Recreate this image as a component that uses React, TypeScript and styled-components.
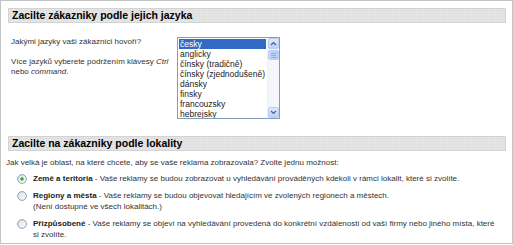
import React, { useState } from 'react'
import styled, { createGlobalStyle } from 'styled-components'

const GlobalStyle = createGlobalStyle`
  html, body {
    margin: 0;
    padding: 0;
    background: #fff;
  }
  body {
    font-family: "Liberation Sans", Arial, sans-serif;
  }
`

const Panel = styled.div`
  width: 513px;
  height: 244px;
  box-sizing: border-box;
  border: 1px solid #c4c4c4;
  padding: 7px 6px 0 7px;
  font-size: 8px;
  color: #333;
`

const Header = styled.div`
  height: 15px;
  box-sizing: border-box;
  border: 1px solid #d3d3d3;
  background-color: #e4e4e4;
  background-image: radial-gradient(#d6d6d6 0.6px, transparent 0.7px);
  background-size: 3px 3px;
  padding-left: 3px;
  font-size: 10.5px;
  font-weight: bold;
  line-height: 13px;
  color: #000;
`

const LanguageRow = styled.div`
  display: flex;
  margin-top: 14px;
  margin-bottom: 17px;
`

const Intro = styled.div`
  width: 169px;
  box-sizing: border-box;
  padding-left: 3px;
  line-height: 10px;

  p {
    margin: 0 0 10px;
  }
  em {
    font-style: italic;
  }
`

const ListBox = styled.div`
  display: flex;
  width: 103px;
  height: 82px;
  box-sizing: border-box;
  border: 1px solid #7f9db9;
  background: #fff;
`

const Options = styled.ul`
  flex: 1;
  margin: 0;
  padding: 1px 1px 0;
  list-style: none;
  overflow: hidden;
  font-size: 8.5px;
`

const Option = styled.li<{ $active?: boolean }>`
  height: 10px;
  line-height: 10px;
  padding-left: 1px;
  white-space: nowrap;
  color: ${p => (p.$active ? '#fff' : '#222')};
  background: ${p => (p.$active ? '#316ac5' : 'transparent')};
`

const Scrollbar = styled.div`
  display: flex;
  flex-direction: column;
  width: 11px;
  background: #f4f6fb;
  border-left: 1px solid #eef1f8;
`

const ScrollButton = styled.div`
  display: flex;
  align-items: center;
  justify-content: center;
  height: 11px;
  box-sizing: border-box;
  border: 1px solid #b9cdf5;
  border-radius: 2px;
  background: linear-gradient(#dfe9fd, #bcd0f7);
`

const Thumb = styled.div`
  height: 10px;
  margin-top: 1px;
  box-sizing: border-box;
  border: 1px solid #b9cdf5;
  border-radius: 2px;
  background: linear-gradient(90deg, #c9d9fb, #b5cbf6);
  display: flex;
  flex-direction: column;
  justify-content: center;
  align-items: center;
  gap: 1px;

  span {
    display: block;
    width: 5px;
    height: 1px;
    background: #8fa9de;
  }
`

const Track = styled.div`
  flex: 1;
`

const Intro2 = styled.div`
  margin: 6px 0 5px -2px;
  line-height: 11px;
`

const RadioList = styled.div`
  display: flex;
  flex-direction: column;
  gap: 6px;
`

const RadioRow = styled.label`
  display: flex;
  align-items: flex-start;
  padding-left: 9px;
  line-height: 11px;
  cursor: pointer;
`

const RadioMark = styled.span`
  flex: none;
  width: 10px;
  height: 11px;
  margin-right: 6px;
  display: flex;
  align-items: center;
`

const RadioText = styled.span`
  flex: 1;
  padding-right: 8px;

  b {
    color: #222;
  }
`

function Radio({ checked }: { checked: boolean }) {
  return (
    <RadioMark>
      <svg width="10" height="10" viewBox="0 0 10 10">
        <defs>
          <linearGradient id="rg" x1="0" y1="0" x2="1" y2="1">
            <stop offset="0" stopColor="#dcdcd6" />
            <stop offset="1" stopColor="#ffffff" />
          </linearGradient>
        </defs>
        <circle cx="5" cy="5" r="4.4" fill="url(#rg)" stroke="#7d99bd" strokeWidth="0.9" />
        {checked && <circle cx="5" cy="5" r="1.8" fill="#2fb12f" />}
      </svg>
    </RadioMark>
  )
}

const languages = [
  'česky',
  'anglicky',
  'čínsky (tradičně)',
  'čínsky (zjednodušeně)',
  'dánsky',
  'finsky',
  'francouzsky',
  'hebrejsky',
]

const choices = [
  {
    title: 'Země a teritoria',
    text: ' - Vaše reklamy se budou zobrazovat u vyhledávání prováděných kdekoli v rámci lokalit, které si zvolíte.',
  },
  {
    title: 'Regiony a města',
    text: ' - Vaše reklamy se budou objevovat hledajícím ve zvolených regionech a městech.',
    note: '(Není dostupné ve všech lokalitách.)',
  },
  {
    title: 'Přizpůsobené',
    text: ' - Vaše reklamy se objeví na vyhledávání provedená do konkrétní vzdálenosti od vaší firmy nebo jiného místa, které si zvolíte.',
  },
]

export default function App() {
  const [selected, setSelected] = useState(0)

  return (
    <>
      <GlobalStyle />
      <Panel>
        <Header>Zacilte zákazniky podle jejich jazyka</Header>
        <LanguageRow>
          <Intro>
            <p>Jakými jazyky vaši zákazníci hovoří?</p>
            <p>
              Více jazyků vyberete podržením klávesy <em>Ctrl</em>
              <br />
              nebo <em>command</em>.
            </p>
          </Intro>
          <ListBox>
            <Options>
              {languages.map((l, i) => (
                <Option key={l} $active={i === 0}>
                  {l}
                </Option>
              ))}
            </Options>
            <Scrollbar>
              <ScrollButton>
                <svg width="7" height="5" viewBox="0 0 7 5">
                  <path d="M1 4 L3.5 1.5 L6 4" fill="none" stroke="#4d6185" strokeWidth="1.2" />
                </svg>
              </ScrollButton>
              <Thumb>
                <span />
                <span />
                <span />
              </Thumb>
              <Track />
              <ScrollButton>
                <svg width="7" height="5" viewBox="0 0 7 5">
                  <path d="M1 1 L3.5 3.5 L6 1" fill="none" stroke="#4d6185" strokeWidth="1.2" />
                </svg>
              </ScrollButton>
            </Scrollbar>
          </ListBox>
        </LanguageRow>

        <Header>Zacilte na zákazniky podle lokality</Header>
        <Intro2>Jak velká je oblast, na které chcete, aby se vaše reklama zobrazovala? Zvolte jednu možnost:</Intro2>
        <RadioList>
          {choices.map((c, i) => (
            <RadioRow key={c.title} onClick={() => setSelected(i)}>
              <Radio checked={selected === i} />
              <RadioText>
                <b>{c.title}</b>
                {c.text}
                {c.note && (
                  <>
                    <br />
                    {c.note}
                  </>
                )}
              </RadioText>
            </RadioRow>
          ))}
        </RadioList>
      </Panel>
    </>
  )
}
